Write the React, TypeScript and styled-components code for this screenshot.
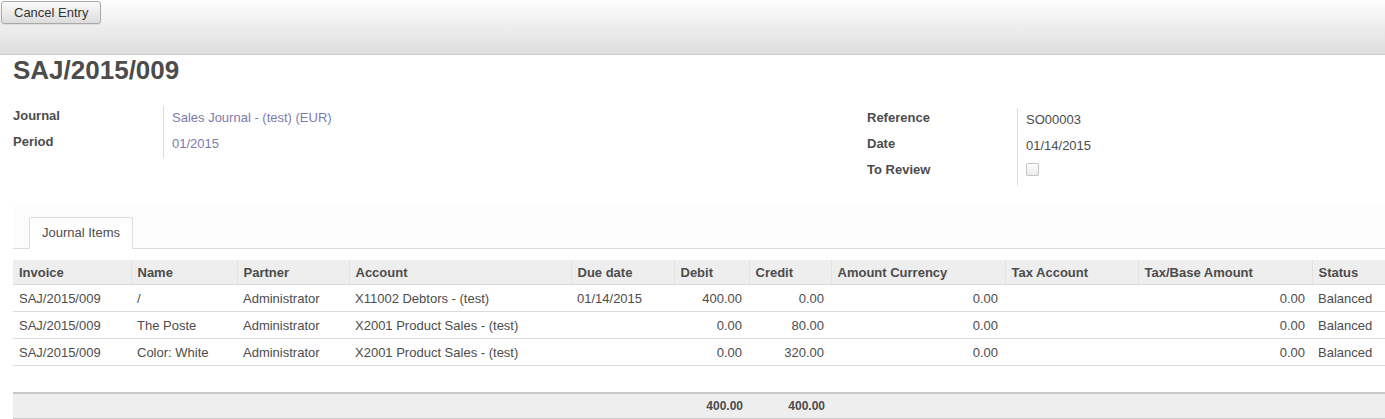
import React from "react";
import styled, { createGlobalStyle } from "styled-components";

const Global = createGlobalStyle`
  html, body { margin: 0; padding: 0; background: #fff; }
  body {
    font-family: "Liberation Sans", Arial, Helvetica, sans-serif;
    font-size: 13px;
    color: #4c4c4c;
  }
`;

const Page = styled.div`
  width: 1385px;
  display: flex;
  flex-direction: column;
`;

const TopBar = styled.div`
  border-bottom: 1px solid #cbcbcb;
  background: linear-gradient(#fdfdfd, #dedede);
  padding: 1px;
  box-sizing: border-box;
  height: 55px;
`;

const Button = styled.button`
  height: 23px;
  padding: 0 12px;
  border: 1px solid #a9a9a9;
  border-radius: 3px;
  background: linear-gradient(#fafafa, #dcdcdc);
  font-family: "Liberation Sans", Arial, sans-serif;
  font-size: 13px;
  color: #333;
  box-shadow: 0 1px 1px rgba(0, 0, 0, 0.08);
  cursor: pointer;
`;

const Sheet = styled.div`
  padding-left: 13px;
  display: flex;
  flex-direction: column;
`;

const Title = styled.h1`
  margin: 2px 0 0;
  font-size: 26px;
  line-height: 27px;
  font-weight: bold;
  color: #4c4c4c;
`;

const Groups = styled.div`
  display: grid;
  grid-template-columns: 854px 1fr;
  margin-top: 22px;
`;

const Group = styled.div<{ $offset?: number }>`
  display: grid;
  grid-template-columns: 151px 1fr;
  grid-auto-rows: 26px;
  margin-top: ${(p) => p.$offset || 0}px;
`;

const Label = styled.div`
  font-weight: bold;
  border-right: 1px solid #dcdcdc;
  line-height: 20px;
`;

const Value = styled.div<{ $link?: boolean }>`
  padding-left: 8px;
  line-height: 24px;
  color: ${(p) => (p.$link ? "#7c7bad" : "#4c4c4c")};
`;

const Check = styled.span`
  display: inline-block;
  width: 11px;
  height: 11px;
  border: 1px solid #c4c4c4;
  border-radius: 2px;
  background: linear-gradient(#fff, #ececec);
  vertical-align: middle;
  margin-top: -6px;
`;

const TabBar = styled.div`
  margin-top: 19px;
  background: #fcfcfc;
  padding-top: 12px;
  padding-left: 16px;
  border-bottom: 1px solid #dcdcdc;
  display: flex;
`;

const Tab = styled.div`
  height: 31px;
  line-height: 30px;
  padding: 0 12px;
  border: 1px solid #dcdcdc;
  border-bottom: none;
  border-radius: 3px 3px 0 0;
  background: #fff;
  margin-bottom: -1px;
  color: #4c4c4c;
`;

const Table = styled.table`
  margin-top: 11px;
  width: 1372px;
  border-collapse: collapse;
  table-layout: fixed;
`;

const Th = styled.th`
  height: 24px;
  padding: 0 6px;
  text-align: left;
  font-weight: bold;
  background: #eeeeee;
  border-left: 1px solid #e2e2e2;
  border-bottom: 1px solid #dcdcdc;
  color: #4c4c4c;
  white-space: nowrap;
  &:first-child { border-left: none; }
`;

const Td = styled.td<{ $num?: boolean }>`
  height: 26px;
  padding: 0 ${(p) => (p.$num ? 7 : 6)}px 0 6px;
  text-align: ${(p) => (p.$num ? "right" : "left")};
  border-bottom: 1px solid #dcdcdc;
  color: #4c4c4c;
  white-space: nowrap;
`;

const Filler = styled.td`
  height: 26px;
  padding: 0;
`;

const FootTd = styled.td<{ $num?: boolean }>`
  height: 24px;
  padding: 0 6px;
  text-align: ${(p) => (p.$num ? "right" : "left")};
  background: #eeeeee;
  border-top: 2px solid #c8c8c8;
  border-bottom: 1px solid #cccccc;
  font-family: "Liberation Sans Narrow", "Liberation Sans", Arial, sans-serif;
  font-weight: bold;
  font-size: 12px;
  color: #4c4c4c;
`;

const widths = [118, 106, 112, 222, 103, 75, 82, 174, 133, 174, 73];
const heads = [
  "Invoice",
  "Name",
  "Partner",
  "Account",
  "Due date",
  "Debit",
  "Credit",
  "Amount Currency",
  "Tax Account",
  "Tax/Base Amount",
  "Status",
];

const rows = [
  ["SAJ/2015/009", "/", "Administrator", "X11002 Debtors - (test)", "01/14/2015", "400.00", "0.00", "0.00", "", "0.00", "Balanced"],
  ["SAJ/2015/009", "The Poste", "Administrator", "X2001 Product Sales - (test)", "", "0.00", "80.00", "0.00", "", "0.00", "Balanced"],
  ["SAJ/2015/009", "Color: White", "Administrator", "X2001 Product Sales - (test)", "", "0.00", "320.00", "0.00", "", "0.00", "Balanced"],
];

const numCols = new Set([5, 6, 7, 9]);

export default function App() {
  return (
    <Page>
      <Global />
      <TopBar>
        <Button>Cancel Entry</Button>
      </TopBar>
      <Sheet>
        <Title>SAJ/2015/009</Title>
        <Groups>
          <Group>
            <Label>Journal</Label>
            <Value $link>Sales Journal - (test) (EUR)</Value>
            <Label>Period</Label>
            <Value $link>01/2015</Value>
          </Group>
          <Group $offset={2}>
            <Label>Reference</Label>
            <Value>SO00003</Value>
            <Label>Date</Label>
            <Value>01/14/2015</Value>
            <Label>To Review</Label>
            <Value>
              <Check />
            </Value>
          </Group>
        </Groups>
        <TabBar>
          <Tab>Journal Items</Tab>
        </TabBar>
        <Table>
          <colgroup>
            {widths.map((w, i) => (
              <col key={i} style={{ width: w }} />
            ))}
          </colgroup>
          <thead>
            <tr>
              {heads.map((h) => (
                <Th key={h}>{h}</Th>
              ))}
            </tr>
          </thead>
          <tbody>
            {rows.map((r, i) => (
              <tr key={i}>
                {r.map((c, j) => (
                  <Td key={j} $num={numCols.has(j)}>
                    {c}
                  </Td>
                ))}
              </tr>
            ))}
            <tr>
              <Filler colSpan={11} />
            </tr>
          </tbody>
          <tfoot>
            <tr>
              {heads.map((_, j) => (
                <FootTd key={j} $num={j === 5 || j === 6}>
                  {j === 5 || j === 6 ? "400.00" : ""}
                </FootTd>
              ))}
            </tr>
          </tfoot>
        </Table>
      </Sheet>
    </Page>
  );
}
